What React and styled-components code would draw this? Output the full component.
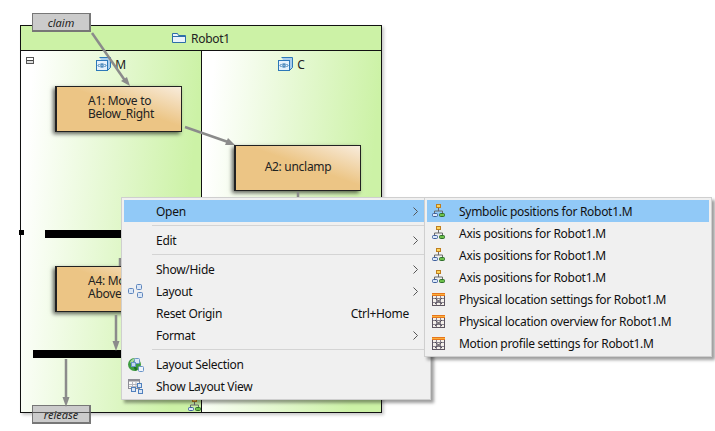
import React from "react";
import styled, { createGlobalStyle } from "styled-components";

const GlobalStyle = createGlobalStyle`
  html, body {
    margin: 0;
    padding: 0;
    background: #fff;
  }
  body {
    font-family: "Noto Sans", "Open Sans", sans-serif;
    letter-spacing: -0.29px;
    overflow: hidden;
  }
`;

const Stage = styled.div`
  position: relative;
  width: 715px;
  height: 431px;
  overflow: hidden;
  background: #fff;
`;

// diagram
const Frame = styled.div`
  position: absolute;
  left: 20px;
  top: 25px;
  width: 360px;
  height: 386px;
  display: grid;
  grid-template-rows: 25px 1fr;
  border: 1px solid #111;
  box-shadow: 2px 2px 3px rgba(0, 0, 0, 0.22);
`;

const TitleBar = styled.div`
  display: flex;
  align-items: center;
  justify-content: center;
  gap: 5px;
  background: #ccf2a6;
  border-bottom: 1px solid #111;
  font-size: 12px;
  color: #222;
`;

const Lanes = styled.div`
  display: grid;
  grid-template-columns: 180px 1fr;
`;

const Lane = styled.div`
  display: flex;
  justify-content: center;
  align-items: flex-start;
  gap: 4px;
  padding-top: 6px;
  font-size: 12px;
  line-height: 15px;
  color: #222;
  background: linear-gradient(95deg, #fff 0%, #fff 6%, #ccf2a6 86%, #ccf2a6 100%);
  & + & {
    border-left: 1px solid #111;
  }
`;

const Collapse = styled.div`
  position: absolute;
  left: 26px;
  top: 57px;
  width: 6px;
  height: 5px;
  border: 1px solid #555;
  background: linear-gradient(#fff 0 2px, #444 2px 3px, #ddd 3px);
`;

const Handle = styled.div`
  position: absolute;
  left: 19px;
  top: 230px;
  width: 5px;
  height: 5px;
  background: #000;
`;

const Signal = styled.div`
  position: absolute;
  left: 32px;
  top: ${(p) => p.$top}px;
  width: 56px;
  height: 16px;
  border: 1px solid #777;
  border-right-width: 2px;
  border-bottom-width: 2px;
  background: #cbcbcb;
  font-size: 11px;
  font-style: italic;
  letter-spacing: 0;
  line-height: 18px;
  text-align: center;
  color: #222;
`;

const ClipLine = styled.div`
  position: absolute;
  left: 32px;
  top: 412px;
  width: 59px;
  height: 1px;
  background: #555;
`;

const Task = styled.div`
  position: absolute;
  left: ${(p) => p.$left}px;
  top: ${(p) => p.$top}px;
  width: 127px;
  height: 46px;
  display: flex;
  align-items: center;
  justify-content: ${(p) => (p.$center ? "center" : "flex-start")};
  padding: 0 0 4px ${(p) => (p.$center ? 0 : 31)}px;
  box-sizing: border-box;
  border: 1px solid #222;
  border-left-width: 2px;
  background: linear-gradient(to top right, #ecc585 55%, #f8ecdc 100%);
  box-shadow: -2px 2px 4px rgba(0, 0, 0, 0.6);
  font-size: 12px;
  line-height: 13px;
  color: #222;
`;

const Bar = styled.div`
  position: absolute;
  left: ${(p) => p.$left}px;
  top: ${(p) => p.$top}px;
  width: 120px;
  height: 8px;
  background: #000;
`;

const Arrows = styled.svg`
  position: absolute;
  left: 0;
  top: 0;
  width: 715px;
  height: 431px;
  pointer-events: none;
`;

const CornerIcon = styled.div`
  position: absolute;
  left: 188px;
  top: 398px;
  line-height: 0;
`;

// menus
const Menu = styled.div`
  position: absolute;
  left: ${(p) => p.$left}px;
  top: 197px;
  width: ${(p) => p.$width}px;
  box-sizing: border-box;
  padding: 2px;
  background: #f0f0f0;
  border: 1px solid #cfcfcf;
  box-shadow: 3px 3px 3px rgba(0, 0, 0, 0.38);
  font-size: 12px;
  color: #111;
`;

const Row = styled.div`
  display: grid;
  grid-template-columns: 32px 1fr auto 15px;
  align-items: center;
  height: 22px;
  background: ${(p) => (p.$active ? "#91c9f7" : "transparent")};
`;

const IconCell = styled.div`
  display: flex;
  align-items: center;
  padding-left: ${(p) => p.$pad ?? 4}px;
  line-height: 0;
`;

const Shortcut = styled.span`
  padding-right: 4px;
`;

const Chevron = styled.svg`
  width: 5px;
  height: 9px;
`;

const Separator = styled.div`
  height: 1px;
  margin: 3px 0 3px 28px;
  background: #d4d4d4;
`;

function OrgIcon() {
  return (
    <svg width="13" height="14" viewBox="0 0 13 14">
      <rect x="4.500" y="0.500" width="4" height="3" fill="#fbd45c" stroke="#c07f1e" />
      <path d="M6.500 4v3M2.500 9V7h8v2" fill="none" stroke="#6a6a6a" />
      <rect x="0.500" y="9.500" width="5" height="3" rx="1" fill="#dbe8f8" stroke="#3f5f9c" />
      <rect x="7.500" y="9.500" width="5" height="3" rx="1" fill="#6cc04a" stroke="#2f6e2c" />
    </svg>
  );
}

function TableIcon() {
  return (
    <svg width="13" height="13" viewBox="0 0 13 13">
      <rect x="0.500" y="0.500" width="12" height="12" fill="#f4f0ea" stroke="#5d5560" />
      <rect x="0" y="0" width="13" height="3" fill="#e8761c" />
      <path d="M0 1.500h13" stroke="#f9b03c" />
      <path d="M1 5.500h11M1 9.500h11M4.500 3v9M8.500 3v9" stroke="#8a8490" />
      <path d="M3 5l7 6M10 5l-7 6" stroke="#4c4650" />
    </svg>
  );
}

function LayoutIcon() {
  return (
    <svg width="16" height="14" viewBox="0 0 16 14">
      <rect x="0.500" y="4.500" width="5" height="5" rx="1" fill="#dbe7f6" stroke="#5f86bd" />
      <rect x="8.500" y="0.500" width="5" height="5" rx="1" fill="#dbe7f6" stroke="#5f86bd" />
      <rect x="9.500" y="8.500" width="5" height="5" rx="1" fill="#dbe7f6" stroke="#5f86bd" />
    </svg>
  );
}

function GlobeLayoutIcon() {
  return (
    <svg width="16" height="15" viewBox="0 0 16 15">
      <circle cx="6.500" cy="7.500" r="6.500" fill="#3d9b3f" />
      <path d="M2 5c2-3 4-4 6-4 0 2-2 2-3 4s-2 2-3 0z" fill="#a6d8a0" />
      <path d="M6 10c1-1 3 0 3 2s-2 2-2 1-2-2-1-3z" fill="#1f6e26" />
      <rect x="6.500" y="1.500" width="5" height="5" rx="1" fill="#dbe7f6" stroke="#6a94c8" />
      <rect x="3.500" y="5.500" width="4" height="4" fill="#c3d8ee" stroke="#6a94c8" />
      <rect x="10.500" y="9.500" width="5" height="5" rx="1" fill="#eef4fb" stroke="#6a94c8" />
    </svg>
  );
}

function LayoutViewIcon() {
  return (
    <svg width="16" height="15" viewBox="0 0 16 15">
      <rect x="0.500" y="0.500" width="11" height="9" fill="#fafafa" stroke="#8d8d95" />
      <path d="M1 1.500h10" stroke="#8d8d95" strokeWidth="2" />
      <path d="M1 5.500h10M1 7.500h10M4.500 3v6M8 3v6" stroke="#b5b5bb" />
      <rect x="3.500" y="8.500" width="4" height="4" fill="#dbe7f6" stroke="#4f80bd" />
      <rect x="9.500" y="4.500" width="4" height="4" fill="#dbe7f6" stroke="#4f80bd" />
      <rect x="10.500" y="10.500" width="4" height="4" fill="#dbe7f6" stroke="#4f80bd" />
    </svg>
  );
}

function FolderIcon() {
  return (
    <svg width="14" height="10" viewBox="0 0 14 10">
      <path d="M0.500 9.500V0.500h5l1 2h7v7z" fill="#eaf3fb" stroke="#2d6ea8" />
      <path d="M1 3.500h12" stroke="#2d6ea8" />
    </svg>
  );
}

function ModuleIcon() {
  return (
    <svg width="15" height="14" viewBox="0 0 15 14">
      <path d="M3.500 0.500h11v10l-3 3" fill="#a8cdec" stroke="#2d78b8" />
      <rect x="0.500" y="3.500" width="11" height="10" fill="#e6f1fb" stroke="#2d78b8" />
      <path d="M3.500 7l-1.500 1.500L3.500 10M8.500 7L10 8.500 8.500 10" fill="none" stroke="#1f6aa8" />
      <rect x="5" y="7" width="2" height="3" fill="none" stroke="#1f6aa8" />
    </svg>
  );
}

function Arrow({ d, head }) {
  return (
    <g>
      <path d={d} stroke="#8b8b8b" strokeWidth="2.5" fill="none" />
      <path d={head} fill="#8b8b8b" />
    </g>
  );
}

const mainItems = [
  { label: "Open", more: true, active: true },
  { sep: true },
  { label: "Edit", more: true },
  { sep: true },
  { label: "Show/Hide", more: true },
  { label: "Layout", more: true, icon: <LayoutIcon /> },
  { label: "Reset Origin", shortcut: "Ctrl+Home" },
  { label: "Format", more: true },
  { sep: true },
  { label: "Layout Selection", icon: <GlobeLayoutIcon /> },
  { label: "Show Layout View", icon: <LayoutViewIcon /> },
];

const subItems = [
  { label: "Symbolic positions for Robot1.M", icon: <OrgIcon />, active: true },
  { label: "Axis positions for Robot1.M", icon: <OrgIcon /> },
  { label: "Axis positions for Robot1.M", icon: <OrgIcon /> },
  { label: "Axis positions for Robot1.M", icon: <OrgIcon /> },
  { label: "Physical location settings for Robot1.M", icon: <TableIcon /> },
  { label: "Physical location overview for Robot1.M", icon: <TableIcon /> },
  { label: "Motion profile settings for Robot1.M", icon: <TableIcon /> },
];

function MenuRows({ items, pad }) {
  return items.map((item, i) =>
    item.sep ? (
      <Separator key={i} />
    ) : (
      <Row key={i} $active={item.active}>
        <IconCell $pad={pad}>{item.icon}</IconCell>
        <span>{item.label}</span>
        {item.shortcut ? <Shortcut>{item.shortcut}</Shortcut> : <span />}
        {item.more ? (
          <Chevron viewBox="0 0 5 9">
            <path d="M0.500 0.500l4 4-4 4" fill="none" stroke="#555" />
          </Chevron>
        ) : (
          <span />
        )}
      </Row>
    )
  );
}

function App() {
  return (
    <Stage>
      <GlobalStyle />
      <Frame>
        <TitleBar>
          <FolderIcon />
          Robot1
        </TitleBar>
        <Lanes>
          <Lane>
            <ModuleIcon />M
          </Lane>
          <Lane>
            <ModuleIcon />C
          </Lane>
        </Lanes>
      </Frame>
      <Collapse />
      <Handle />
      <Task $left={55} $top={86}>
        <div>
          A1: Move to
          <br />
          Below_Right
        </div>
      </Task>
      <Task $left={234} $top={145} $center>
        A2: unclamp
      </Task>
      <Task $left={55} $top={266}>
        <div>
          A4: Move to
          <br />
          Above_Right
        </div>
      </Task>
      <Bar $left={45} $top={230} />
      <Bar $left={33} $top={350} />
      <Signal $top={13}>claim</Signal>
      <Signal $top={405}>release</Signal>
      <ClipLine />
      <Arrows viewBox="0 0 715 431">
        <Arrow d="M92 33L126 82" head="M130 86L121 81 127 77z" />
        <Arrow d="M185 127L228 142" head="M235 145L225 145 228 138z" />
        <Arrow d="M298 192V200" head="" />
        <Arrow d="M120 258V266" head="" />
        <Arrow d="M116 315V344" head="M116 351L112.500 341H119.500z" />
        <Arrow d="M66 359V399" head="M66 407L62.500 397H69.500z" />
      </Arrows>
      <CornerIcon>
        <OrgIcon />
      </CornerIcon>
      <Menu $left={121} $width={310}>
        <MenuRows items={mainItems} pad={4} />
      </Menu>
      <Menu $left={424} $width={288}>
        <MenuRows items={subItems} pad={5} />
      </Menu>
    </Stage>
  );
}

export default App;
